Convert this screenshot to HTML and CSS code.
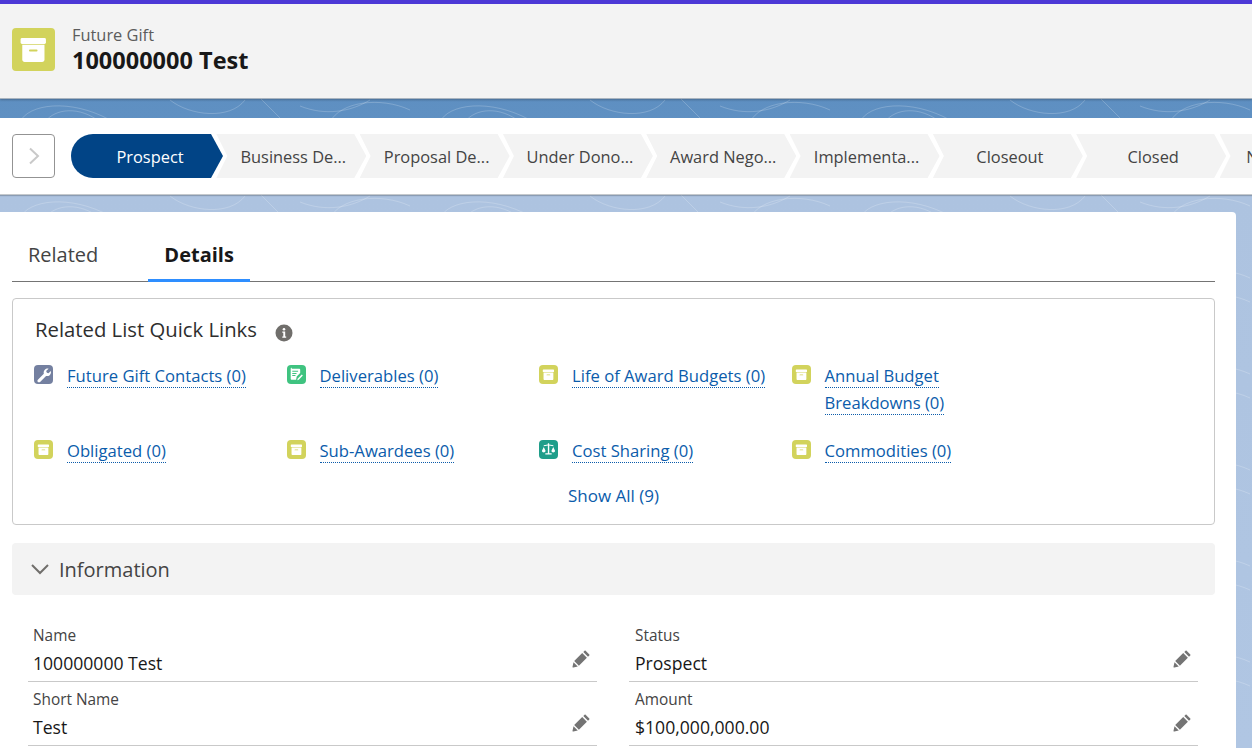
FILE: index.html
```html
<!DOCTYPE html>
<html lang="en">
<head>
    <meta charset="UTF-8">
    <title>100000000 Test | Future Gift</title>
    <link rel="stylesheet" href="styles.css">
</head>
<body>
    <svg class="defs" width="0" height="0">
        <symbol id="box" viewBox="0 0 18 18">
            <rect x="3.600" y="4.200" width="10.600" height="2.500" rx=".6" fill="#fff"/>
            <path d="M4.300 7h9.300v6.200c0 .6-.4 1-1 1H5.300c-.6 0-1-.4-1-1z" fill="#fff"/>
            <rect x="7.100" y="9" width="3.600" height=".8" rx=".4" fill="#d2d35c"/>
        </symbol>
        <symbol id="pencil" viewBox="0 0 20 20">
            <path d="M13.600 2.700l3.700 3.700c.3.3.3.7 0 1L16 8.700 11.300 4l1.300-1.300c.3-.3.700-.3 1 0zM10.200 5.100l4.700 4.700-8 8-4.700-4.700zM1.500 14.200l4.300 4.300-4.400 1.100c-.5.100-1-.4-.9-.9z" fill="#747474"/>
        </symbol>
    </svg>

    <header class="record-head">
        <div class="tile tile-large"><svg><use href="#box"/></svg></div>
        <div class="record-title">
            <div class="record-type">Future Gift</div>
            <div class="record-name">100000000 Test</div>
        </div>
    </header>

    <div class="path-bar">
        <button class="path-toggle">
            <svg width="14" height="18" viewBox="0 0 14 18"><path d="M3 1.500L11 9l-8 7.500" fill="none" stroke="#c9c9c9" stroke-width="2"/></svg>
        </button>
        <div class="path-steps">
            <div class="step step-current">Prospect</div>
            <div class="step">Business De...</div>
            <div class="step">Proposal De...</div>
            <div class="step">Under Dono...</div>
            <div class="step">Award Nego...</div>
            <div class="step">Implementa...</div>
            <div class="step">Closeout</div>
            <div class="step">Closed</div>
            <div class="step">Not Awarded</div>
        </div>
    </div>

    <main class="card">
        <div class="tabs">
            <a class="tab">Related</a>
            <a class="tab tab-active">Details</a>
        </div>

        <section class="quick-links">
            <h2>Related List Quick Links
                <svg class="info" width="18" height="18" viewBox="0 0 18 18">
                    <circle cx="9" cy="9" r="8.500" fill="#706e6b"/>
                    <circle cx="9" cy="5.300" r="1.300" fill="#fff"/>
                    <path d="M7.300 7.600h2.900v5h1v1.200H7.300v-1.200h1v-3.800h-1z" fill="#fff"/>
                </svg>
            </h2>
            <div class="link-grid">
                <div class="link-item">
                    <span class="tile tile-small tile-slate">
                        <svg viewBox="0 0 18 18"><path d="M13.800 3.500l-2.300 2.300.7 1.500 1.500.6 2.300-2.200c.3 1.500-.1 3-1.100 3.900-1 .9-2.300 1.100-3.500.8l-5.600 5.600c-.6.600-1.500.6-2.100 0-.6-.6-.6-1.500 0-2.100L9.300 8.300C9 7 9.200 5.700 10.100 4.700c1-1 2.400-1.500 3.700-1.200z" fill="#fff"/></svg>
                    </span>
                    <span class="link-text"><a>Future Gift Contacts (0)</a></span>
                </div>
                <div class="link-item">
                    <span class="tile tile-small tile-green">
                        <svg viewBox="0 0 18 18"><path d="M4.500 3.500h7c.5 0 1 .4 1 1v3l-3.300 3.400-.6 3.100H4.500c-.5 0-1-.4-1-1v-9.500c0-.6.500-1 1-1z" fill="#fff"/><path d="M5 6h5.500M5 8h4M5 10h3" stroke="#3fc380" stroke-width="1"/><path d="M14 9l1 1-3.800 4-1.500.5.400-1.500z" fill="#fff"/></svg>
                    </span>
                    <span class="link-text"><a>Deliverables (0)</a></span>
                </div>
                <div class="link-item">
                    <span class="tile tile-small"><svg><use href="#box"/></svg></span>
                    <span class="link-text"><a>Life of Award Budgets (0)</a></span>
                </div>
                <div class="link-item">
                    <span class="tile tile-small"><svg><use href="#box"/></svg></span>
                    <span class="link-text"><a>Annual Budget<br>Breakdowns (0)</a></span>
                </div>
                <div class="link-item">
                    <span class="tile tile-small"><svg><use href="#box"/></svg></span>
                    <span class="link-text"><a>Obligated (0)</a></span>
                </div>
                <div class="link-item">
                    <span class="tile tile-small"><svg><use href="#box"/></svg></span>
                    <span class="link-text"><a>Sub-Awardees (0)</a></span>
                </div>
                <div class="link-item">
                    <span class="tile tile-small tile-teal">
                        <svg viewBox="0 0 18 18"><path d="M8.400 3h1.200v1.300l4 .7v1l-3.900-.7v7.200h2.300v1.200H6v-1.200h2.400V5.300l-3.900.7V5l3.900-.7z" fill="#fff"/><path d="M2.800 10.300L4.500 6.600l1.700 3.700c0 1-.8 1.500-1.700 1.500s-1.700-.5-1.700-1.500zM11.800 10.300l1.700-3.700 1.700 3.700c0 1-.8 1.500-1.700 1.500s-1.700-.5-1.700-1.500z" fill="#fff"/></svg>
                    </span>
                    <span class="link-text"><a>Cost Sharing (0)</a></span>
                </div>
                <div class="link-item">
                    <span class="tile tile-small"><svg><use href="#box"/></svg></span>
                    <span class="link-text"><a>Commodities (0)</a></span>
                </div>
            </div>
            <div class="show-all"><a>Show All (9)</a></div>
        </section>

        <div class="section-head">
            <svg width="20" height="12" viewBox="0 0 20 12"><path d="M2 2l8 8 8-8" fill="none" stroke="#706e6b" stroke-width="2"/></svg>
            <span>Information</span>
        </div>

        <div class="fields">
            <div class="field">
                <div class="field-label">Name</div>
                <div class="field-value">100000000 Test</div>
                <svg class="edit"><use href="#pencil"/></svg>
            </div>
            <div class="field">
                <div class="field-label">Status</div>
                <div class="field-value">Prospect</div>
                <svg class="edit"><use href="#pencil"/></svg>
            </div>
            <div class="field">
                <div class="field-label">Short Name</div>
                <div class="field-value">Test</div>
                <svg class="edit"><use href="#pencil"/></svg>
            </div>
            <div class="field">
                <div class="field-label">Amount</div>
                <div class="field-value">$100,000,000.00</div>
                <svg class="edit"><use href="#pencil"/></svg>
            </div>
        </div>
    </main>
</body>
</html>
```

FILE: styles.css
```css
* {
    box-sizing: border-box;
}
html, body {
    height: 748px;
    overflow: hidden;
}
body {
    margin: 0;
    font-family: "Open Sans", "Noto Sans", sans-serif;
    color: #181818;
    background-color: #aec4e0;
    background-image:
        url("data:image/svg+xml,%3Csvg xmlns='http://www.w3.org/2000/svg' width='420' height='96' fill='none' stroke='%23ffffff' stroke-opacity='.2'%3E%3Cpath d='M20 24C28 6 70 0 110 22M45 24C55 10 80 8 100 24M170 2c20 16 60 20 75 0M260 0l24 24M330 24c10-20 50-26 80-12M300 8c25 10 50 6 70-6M6 96C20 76 70 72 110 90M45 96c10-12 35-14 55 0M170 74c20 16 60 20 75 2M262 72l26 24M330 96c10-20 50-26 80-12M300 78c25 10 50 6 70-6'/%3E%3C/svg%3E"),
        linear-gradient(#5b8cc0 0, #5f90c2 118px, #adc3e0 194px, #b0c6e3 100%);
    background-position: 0 98px, 0 0;
    background-repeat: repeat, no-repeat;
}
.defs {
    position: absolute;
}
a {
    color: #0b5cab;
}

/* record header */
.record-head {
    height: 99px;
    display: flex;
    align-items: center;
    gap: 17px;
    padding: 0 12px 4px;
    background: #f3f3f3;
    border-top: 4px solid #4c38d6;
    border-bottom: 1px solid #a9b4bf;
    box-shadow: 0 1px 2px rgba(0, 0, 0, .25);
}
.tile {
    display: block;
    flex: none;
    background: #d2d35c;
    border-radius: 4px;
}
.tile svg {
    display: block;
    width: 100%;
    height: 100%;
}
.tile-large {
    width: 43px;
    height: 43px;
}
.tile-small {
    width: 19px;
    height: 19px;
}
.tile-slate { background: #7480a0; }
.tile-green { background: #3fc380; }
.tile-teal { background: #1f9e8a; }
.record-type {
    padding-top: 1px;
    font-size: 16.400px;
    line-height: 21px;
    color: #5c5c5c;
}
.record-name {
    font-size: 23.500px;
    line-height: 30px;
    font-weight: 700;
}

/* path */
.path-bar {
    height: 77px;
    margin-top: 19px;
    display: flex;
    align-items: center;
    padding: 0 0 0 12px;
    background: #fff;
    border-bottom: 1px solid #c4c8cc;
    box-shadow: 0 1px 1px rgba(0, 0, 0, .2);
    overflow: hidden;
}
.path-toggle {
    width: 43px;
    height: 44px;
    flex: none;
    display: flex;
    align-items: center;
    justify-content: center;
    padding: 0;
    background: #fff;
    border: 1px solid #939393;
    border-radius: 4px;
}
.path-steps {
    display: flex;
    margin-left: 16px;
}
.step {
    width: 150px;
    height: 44px;
    flex: none;
    margin-left: -6.700px;
    padding: 0 11px 0 15px;
    line-height: 46px;
    font-size: 16.400px;
    text-align: center;
    white-space: nowrap;
    color: #444;
    background: #f3f3f3;
    clip-path: polygon(0 0, 138px 0, 150px 50%, 138px 100%, 0 100%, 11px 50%);
}
.step-current {
    width: 152px;
    margin-left: 0;
    padding: 0 0 0 6px;
    color: #fff;
    background: #014486;
    border-radius: 22px 0 0 22px;
    clip-path: polygon(0 0, 140px 0, 152px 50%, 140px 100%, 0 100%);
}

/* main card */
.card {
    width: 1236px;
    height: 560px;
    margin-top: 17px;
    padding: 0 21px 0 12px;
    background: #fff;
    border-radius: 0 4px 0 0;
}
.tabs {
    display: flex;
    height: 70px;
    border-bottom: 1px solid #747474;
}
.tab {
    height: 70px;
    padding: 27px 16px 0;
    font-size: 20px;
    line-height: 32px;
    color: #444;
}
.tab-active {
    margin-left: 34px;
    font-weight: 700;
    color: #181818;
    border-bottom: 3px solid #2e8eff;
}

.quick-links {
    height: 227px;
    margin-top: 16px;
    padding: 15px 22px 0;
    border: 1px solid #c9c9c9;
    border-radius: 4px;
}
.quick-links h2 {
    margin: 0;
    font-size: 20.300px;
    line-height: 30px;
    font-weight: 400;
    color: #2e2e2e;
}
.info {
    margin-left: 13px;
    vertical-align: -5px;
}
.link-grid {
    display: grid;
    grid-template-columns: repeat(4, 252.500px);
    row-gap: 21px;
    margin-top: 18px;
    margin-left: -1px;
}
.link-item {
    display: flex;
    align-items: flex-start;
    gap: 14px;
    font-size: 16.650px;
    line-height: 27px;
}
.link-item .tile {
    margin-top: 3px;
}
.link-item a {
    border-bottom: 1px dotted #0b5cab;
}
.show-all {
    margin-top: 18px;
    text-align: center;
    font-size: 17px;
    line-height: 27px;
}

.section-head {
    height: 52px;
    margin-top: 18px;
    display: flex;
    align-items: center;
    gap: 9px;
    padding: 0 0 0 18px;
    background: #f3f3f3;
    border-radius: 4px;
    font-size: 20px;
    color: #444;
}
.fields {
    display: grid;
    grid-template-columns: 569px 569px;
    column-gap: 32px;
    margin: 23px 0 0 16px;
}
.field {
    position: relative;
    height: 64px;
    padding: 7px 5px 0;
    border-bottom: 1px solid #c9c9c9;
}
.field:nth-child(even) {
    padding-left: 6px;
}
.field-label {
    font-size: 15.400px;
    line-height: 22px;
    color: #444;
}
.field-value {
    margin-top: 3px;
    font-size: 17.600px;
    line-height: 26px;
}
.edit {
    position: absolute;
    right: 5px;
    top: 30px;
    width: 20px;
    height: 20px;
}
```
